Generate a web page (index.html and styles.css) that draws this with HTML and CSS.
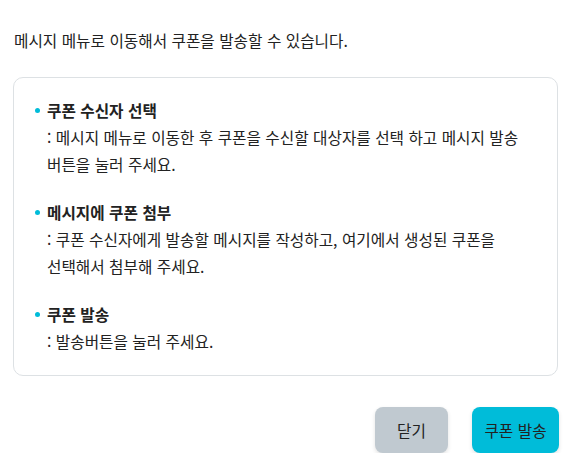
FILE: index.html
```html
<!DOCTYPE html>
<html lang="ko">
<head>
<meta charset="utf-8">
<link rel="stylesheet" href="styles.css">
</head>
<body>
<div class="dialog">
  <p class="intro">메시지 메뉴로 이동해서 쿠폰을 발송할 수 있습니다.</p>
  <div class="card">
    <div class="step">
      <div class="title">쿠폰 수신자 선택</div>
      <div class="desc">: 메시지 메뉴로 이동한 후 쿠폰을 수신할 대상자를 선택 하고 메시지 발송<br>버튼을 눌러 주세요.</div>
    </div>
    <div class="step">
      <div class="title">메시지에 쿠폰 첨부</div>
      <div class="desc">: 쿠폰 수신자에게 발송할 메시지를 작성하고, 여기에서 생성된 쿠폰을<br>선택해서 첨부해 주세요.</div>
    </div>
    <div class="step">
      <div class="title">쿠폰 발송</div>
      <div class="desc">: 발송버튼을 눌러 주세요.</div>
    </div>
  </div>
  <div class="actions">
    <button class="btn btn-close">닫기</button>
    <button class="btn btn-send">쿠폰 발송</button>
  </div>
</div>
</body>
</html>
```
FILE: styles.css
```css
html, body {
  margin: 0;
  padding: 0;
  background: #fff;
}
body {
  font-family: "Noto Sans CJK KR", "Noto Sans", sans-serif;
  color: #222;
  font-size: 15.7px;
}
.dialog {
  padding: 27px 14px 0 13px;
  width: 546px;
}
.intro {
  margin: 0 0 0 1px;
  line-height: 28px;
}
.card {
  margin: 22px 1px 0 0;
  border: 1px solid #dde1e4;
  border-radius: 10px;
  padding: 19px 20px 20px 21px;
}
.step + .step {
  margin-top: 21px;
}
.title {
  position: relative;
  padding-left: 12px;
  font-weight: 700;
  line-height: 27px;
}
.title::before {
  content: "";
  position: absolute;
  left: 0;
  top: 11px;
  width: 5px;
  height: 5px;
  border-radius: 50%;
  background: #00bcd9;
}
.desc {
  padding-left: 12px;
  line-height: 27px;
}
.actions {
  display: flex;
  justify-content: flex-end;
  gap: 24px;
  margin-top: 31px;
}
.btn {
  height: 46px;
  border: none;
  border-radius: 8px;
  font-family: inherit;
  font-size: 15.7px;
  color: #222;
  box-shadow: 0 2px 4px rgba(0,0,0,0.12);
  padding: 0;
}
.btn-close {
  width: 73px;
  background: #c0c9d0;
}
.btn-send {
  width: 87px;
  background: #00bcd9;
}
```
